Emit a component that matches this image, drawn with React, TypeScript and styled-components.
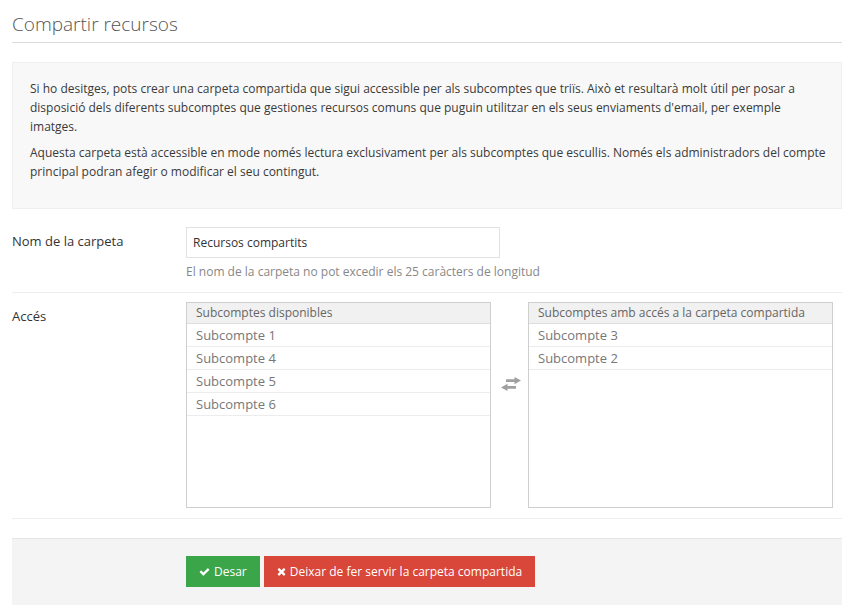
import React from "react";
import styled, { createGlobalStyle } from "styled-components";

const Global = createGlobalStyle`
  html, body { margin: 0; padding: 0; background: #fff; }
  body { font-family: "Open Sans", "Liberation Sans", sans-serif; color: #333; }
  * { box-sizing: border-box; }
`;

const Page = styled.div`
  padding: 0 8px 0 12px;
  width: 850px;
`;

const Title = styled.h1`
  margin: 10px 0 0;
  padding-bottom: 4px;
  font-size: 19px;
  line-height: 28px;
  font-weight: 300;
  color: #555;
  border-bottom: 1px solid #dcdcdc;
`;

const InfoBox = styled.div`
  margin-top: 19px;
  background: #f8f8f8;
  border: 1px solid #efefef;
  padding: 16px 12px 27px 17px;
  font-size: 12px;
  line-height: 19px;
  color: #3a3a3a;
  p { margin: 0 0 7px; }
  p:last-child { margin-bottom: 0; }
`;

const Row = styled.div<{ $top: number; $bottom: number }>`
  display: grid;
  grid-template-columns: 174px 1fr;
  padding: ${(p) => p.$top}px 0 ${(p) => p.$bottom}px;
  border-bottom: 1px solid #eee;
`;

const Label = styled.div`
  font-size: 13px;
  line-height: 17px;
  padding-top: 6px;
  color: #333;
`;

const Field = styled.div`
  display: flex;
  flex-direction: column;
`;

const Input = styled.input`
  width: 314px;
  height: 31px;
  border: 1px solid #e2e2e2;
  padding: 0 6px;
  font-family: inherit;
  font-size: 12px;
  color: #333;
  outline: none;
`;

const Help = styled.div`
  margin-top: 5px;
  font-size: 12px;
  line-height: 18px;
  color: #888;
`;

const Lists = styled.div`
  display: grid;
  grid-template-columns: 305px 37px 305px;
  align-items: start;
`;

const ListBox = styled.div`
  height: 206px;
  border: 1px solid #cfcfcf;
  background: #fff;
  display: flex;
  flex-direction: column;
`;

const ListHeader = styled.div`
  height: 21px;
  line-height: 20px;
  padding: 0 9px;
  font-size: 12px;
  color: #666;
  background: #f1f1f1;
  border-bottom: 1px solid #dedede;
`;

const ListItem = styled.div`
  height: 23px;
  line-height: 22px;
  padding: 0 9px;
  font-size: 13px;
  color: #777;
  border-bottom: 1px solid #ececec;
`;

const Swap = styled.div`
  display: flex;
  justify-content: center;
  padding-left: 2px;
  margin-top: 75px;
  color: #a0a0a0;
`;

const Footer = styled.div`
  margin-top: 19px;
  background: #f4f4f4;
  border-top: 1px solid #e6e6e6;
  padding: 17px 0 18px 174px;
  display: flex;
  gap: 4px;
`;

const Button = styled.button<{ $variant: "ok" | "danger" }>`
  height: 31px;
  border: none;
  padding: 0 13px;
  font-family: inherit;
  font-size: 12px;
  color: #fff;
  display: inline-flex;
  align-items: center;
  gap: 4px;
  background: ${(p) => (p.$variant === "ok" ? "#3ba54a" : "#d9463a")};
  cursor: pointer;
`;

const CheckIcon = () => (
  <svg width="11" height="11" viewBox="0 200 1792 1300" fill="currentColor">
    <path d="M1671 566q0 40-28 68l-724 724-136 136q-28 28-68 28t-68-28l-136-136-362-362q-28-28-28-68t28-68l136-136q28-28 68-28t68 28l294 295 656-657q28-28 68-28t68 28l136 136q28 28 28 68z" />
  </svg>
);

const TimesIcon = () => (
  <svg width="9" height="11" viewBox="0 200 1408 1400" fill="currentColor">
    <path d="M1298 1322q0 40-28 68l-136 136q-28 28-68 28t-68-28l-294-294-294 294q-28 28-68 28t-68-28l-136-136q-28-28-28-68t28-68l294-294-294-294q-28-28-28-68t28-68l136-136q28-28 68-28t68 28l294 294 294-294q28-28 68-28t68 28l136 136q28 28 28 68t-28 68l-294 294 294 294q28 28 28 68z" />
  </svg>
);

const ExchangeIcon = () => (
  <svg width="20" height="14" viewBox="0 0 20 14" fill="currentColor">
    <path d="M5 2.2h8.5V0L20 3.6 13.5 7.2V5H5z" />
    <path d="M15 9h-8.5V6.8L0 10.4 6.5 14v-2.2H15z" />
  </svg>
);

const available = ["Subcompte 1", "Subcompte 4", "Subcompte 5", "Subcompte 6"];
const granted = ["Subcompte 3", "Subcompte 2"];

export default function App() {
  return (
    <Page>
      <Global />
      <Title>Compartir recursos</Title>
      <InfoBox>
        <p>
          Si ho desitges, pots crear una carpeta compartida que sigui accessible per als subcomptes que triïs. Això et
          resultarà molt útil per posar a disposició dels diferents subcomptes que gestiones recursos comuns que puguin
          utilitzar en els seus enviaments d'email, per exemple imatges.
        </p>
        <p>
          Aquesta carpeta està accessible en mode només lectura exclusivament per als subcomptes que escullis. Només els
          administradors del compte principal podran afegir o modificar el seu contingut.
        </p>
      </InfoBox>
      <Row $top={18} $bottom={11}>
        <Label>Nom de la carpeta</Label>
        <Field>
          <Input defaultValue="Recursos compartits" />
          <Help>El nom de la carpeta no pot excedir els 25 caràcters de longitud</Help>
        </Field>
      </Row>
      <Row $top={9} $bottom={10}>
        <Label>Accés</Label>
        <Lists>
          <ListBox>
            <ListHeader>Subcomptes disponibles</ListHeader>
            {available.map((s) => (
              <ListItem key={s}>{s}</ListItem>
            ))}
          </ListBox>
          <Swap>
            <ExchangeIcon />
          </Swap>
          <ListBox>
            <ListHeader>Subcomptes amb accés a la carpeta compartida</ListHeader>
            {granted.map((s) => (
              <ListItem key={s}>{s}</ListItem>
            ))}
          </ListBox>
        </Lists>
      </Row>
      <Footer>
        <Button $variant="ok">
          <CheckIcon />
          <span>Desar</span>
        </Button>
        <Button $variant="danger">
          <TimesIcon />
          <span>Deixar de fer servir la carpeta compartida</span>
        </Button>
      </Footer>
    </Page>
  );
}
